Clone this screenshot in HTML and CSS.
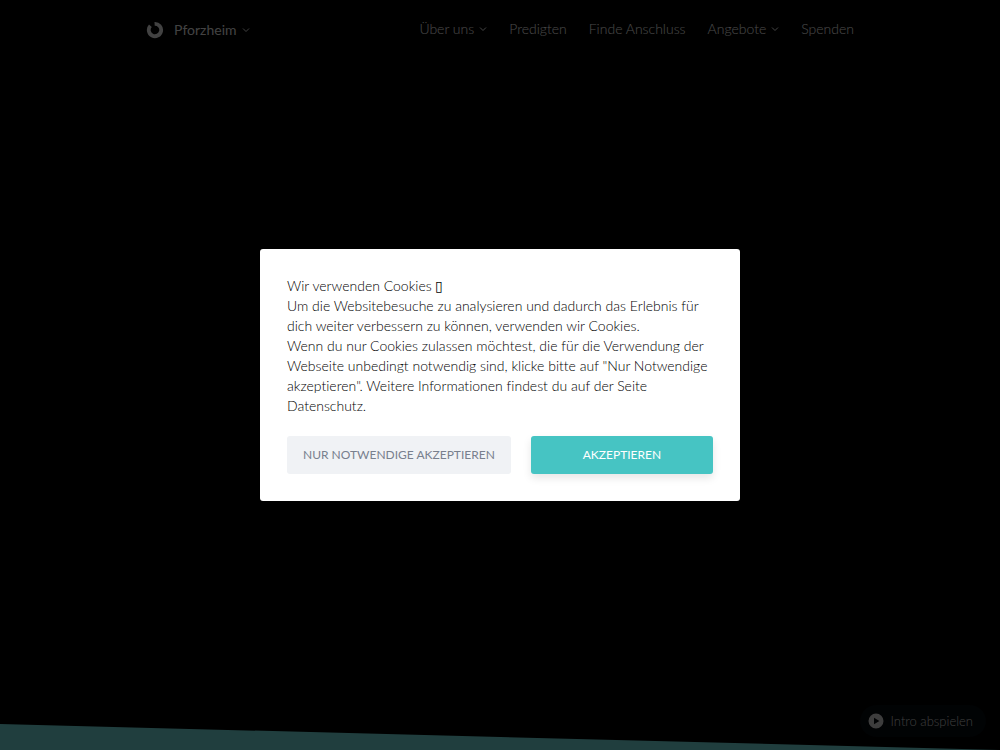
FILE: index.html
```html
<!DOCTYPE html>
<html lang="de">
<head>
    <meta charset="UTF-8">
    <meta name="viewport" content="width=device-width, initial-scale=1.0">
    <title>Pforzheim</title>
    <link rel="stylesheet" href="styles.css">
</head>
<body>
    <div class="hero">
        <header class="header">
            <a href="#" class="brand">
                <svg class="logo" viewBox="0 0 18 18" aria-hidden="true">
                    <path d="M8.6 2.8A6.2 6.2 0 1 1 4.4 4.8" fill="none" stroke="currentColor" stroke-width="3.8"/>
                </svg>
                Pforzheim
                <svg class="chevron" viewBox="0 0 8 8" aria-hidden="true"><path d="M1 2.5L4 5.5L7 2.5"/></svg>
            </a>
            <nav class="nav">
                <a href="#">Über uns
                    <svg class="chevron" viewBox="0 0 8 8" aria-hidden="true"><path d="M1 2.5L4 5.5L7 2.5"/></svg>
                </a>
                <a href="#">Predigten</a>
                <a href="#">Finde Anschluss</a>
                <a href="#">Angebote
                    <svg class="chevron" viewBox="0 0 8 8" aria-hidden="true"><path d="M1 2.5L4 5.5L7 2.5"/></svg>
                </a>
                <a href="#">Spenden</a>
            </nav>
        </header>
        <div class="slope"></div>
    </div>

    <button type="button" class="intro">
        <svg class="play" viewBox="0 0 16 16" aria-hidden="true">
            <path fill-rule="evenodd" fill="currentColor" d="M8 0.5a7.5 7.5 0 1 0 0 15a7.5 7.5 0 1 0 0-15zM6 4.8L11.4 8L6 11.2z"/>
        </svg>
        Intro abspielen
    </button>

    <div class="overlay">
        <div class="modal" role="dialog" aria-modal="true" aria-label="Cookies">
            <p class="modal-text">
                Wir verwenden Cookies ▯<br>
                Um die Websitebesuche zu analysieren und dadurch das Erlebnis für dich weiter verbessern zu können, verwenden wir Cookies.<br>
                Wenn du nur Cookies zulassen möchtest, die für die Verwendung der Webseite unbedingt notwendig sind, klicke bitte auf "Nur Notwendige akzeptieren". Weitere Informationen findest du auf der Seite Datenschutz.
            </p>
            <div class="modal-actions">
                <button type="button" class="btn btn-light">Nur Notwendige akzeptieren</button>
                <button type="button" class="btn btn-primary">Akzeptieren</button>
            </div>
        </div>
    </div>
</body>
</html>
```
FILE: styles.css
```css
* {
    box-sizing: border-box;
}
body {
    margin: 0;
    font-family: Lato, "DejaVu Sans", sans-serif;
    font-size: 14px;
    font-weight: 300;
    font-variant-ligatures: none;
    line-height: 20px;
    background: #000;
    color: #fff;
}
a {
    color: inherit;
    text-decoration: none;
}
.hero {
    display: flex;
    flex-direction: column;
    min-height: 100vh;
}
.header {
    display: flex;
    justify-content: space-between;
    width: 100%;
    max-width: 708px;
    margin: 0 auto;
    padding-top: 17px;
}
.brand {
    display: flex;
    align-items: center;
    padding-top: 3px;
    font-size: 14px;
    font-weight: 400;
    color: #ddd;
}
.logo {
    width: 18px;
    height: 18px;
    margin-right: 10px;
}
.nav {
    display: flex;
    gap: 22px;
    color: #eee;
}
.nav a {
    display: flex;
    align-items: center;
}
.chevron {
    width: 8px;
    height: 8px;
    margin-left: 5px;
    fill: none;
    stroke: currentColor;
}
.slope {
    height: 26px;
    margin-top: auto;
    background: #6bcfcf;
    clip-path: polygon(0 0, 100% 100%, 0 100%);
}
.intro {
    position: fixed;
    right: 14px;
    bottom: 13px;
    display: flex;
    align-items: center;
    gap: 7px;
    padding: 6px 13px 6px 8px;
    border: 0;
    border-radius: 16px;
    background: #060a0e;
    color: #ccc;
    font: 300 13px/20px Lato, "DejaVu Sans", sans-serif;
}
.play {
    width: 16px;
    height: 16px;
}

/* Cookie dialog */
.overlay {
    position: fixed;
    inset: 0;
    display: flex;
    align-items: center;
    justify-content: center;
    background: rgba(0, 0, 0, 0.7);
}
.modal {
    width: 100%;
    max-width: 480px;
    padding: 27px;
    border-radius: 3px;
    background: #fff;
    color: #000;
}
.modal-text {
    margin: 0 0 20px;
}
.modal-actions {
    display: flex;
    gap: 20px;
}
.btn {
    padding: 9px 16px;
    border: 0;
    border-radius: 3px;
    font: 12px/20px Lato, "DejaVu Sans", sans-serif;
    text-transform: uppercase;
    white-space: nowrap;
}
.btn-light {
    background: #f0f2f5;
    color: #78808e;
}
.btn-primary {
    flex: 1;
    background: #46c4c3;
    color: #fff;
    box-shadow: 0 4px 8px rgba(0, 0, 0, 0.1);
}
```
